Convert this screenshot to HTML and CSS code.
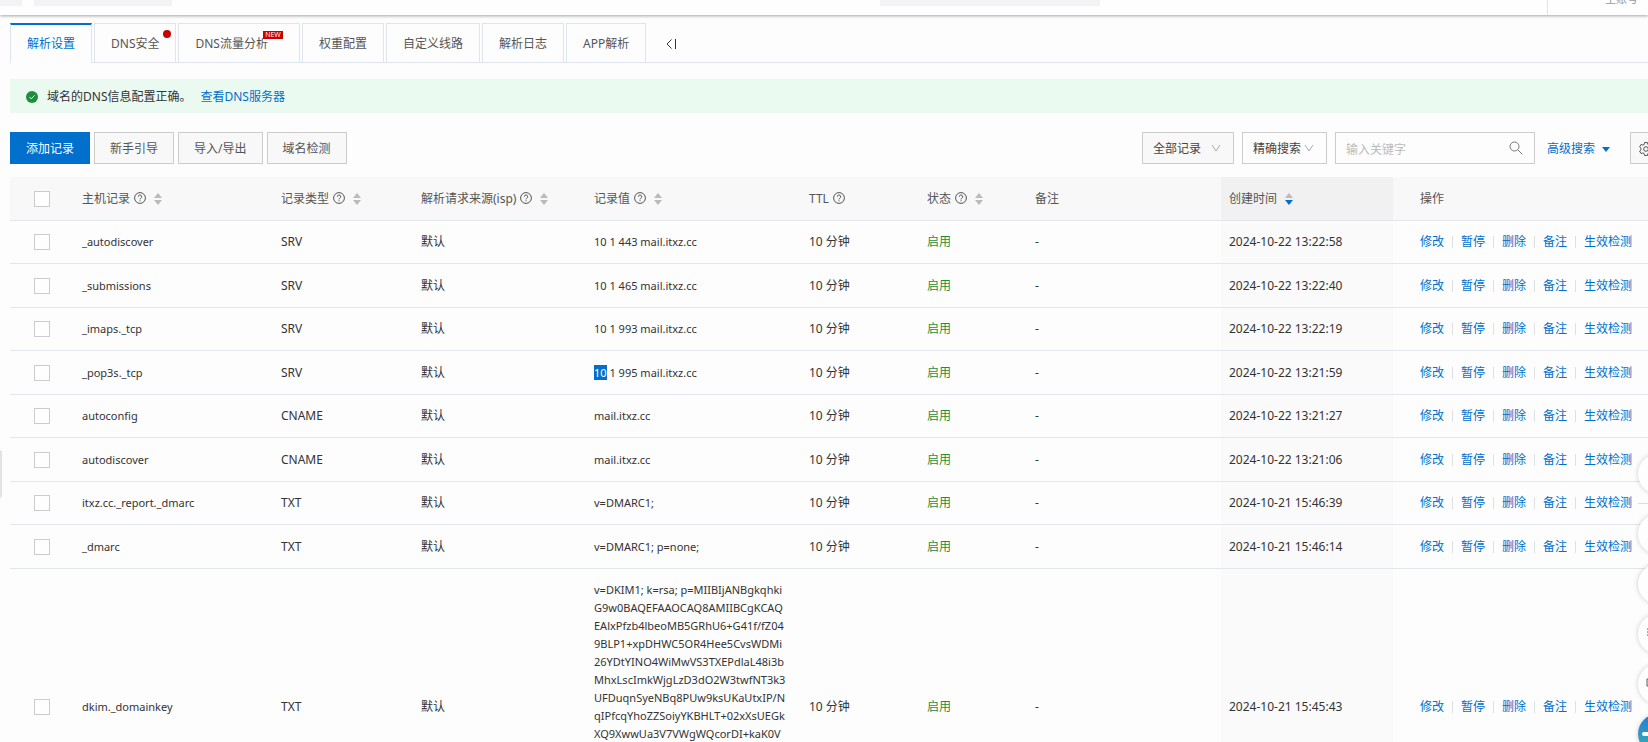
FILE: index.html
```
<!DOCTYPE html>
<html lang="zh-CN">
<head>
	<title>解析设置</title>
	<meta charset="utf-8">
	<meta name="viewport" content="width=device-width, initial-scale=1">
	<link rel="stylesheet" href="styles.css">
</head>
<body>
	<svg class="sprite">
		<symbol id="help" viewBox="0 0 12 12"><circle cx="6" cy="6" r="5.4"/><path d="M4.3 4.7a1.7 1.7 0 1 1 2.5 1.5c-.6.3-.8.6-.8 1.2M6 8.3v1"/></symbol>
		<symbol id="sort" viewBox="0 0 8 12"><path class="up" d="M4 0l4 5H0z"/><path class="down" d="M0 7h8l-4 5z"/></symbol>
		<symbol id="chevron" viewBox="0 0 10 8"><path d="M1 1l4 6 4-6"/></symbol>
	</svg>

	<header class="topbar">
		<span class="block block-logo"></span>
		<span class="block block-menu"></span>
		<span class="block block-search"></span>
		<div class="account"><span>主账号</span></div>
	</header>

	<main class="page">
		<nav class="tabs">
			<a class="tab active" href="#">解析设置</a>
			<a class="tab" href="#">DNS安全<i class="dot"></i></a>
			<a class="tab tab-new" href="#">DNS流量分析<i class="new">NEW</i></a>
			<a class="tab" href="#">权重配置</a>
			<a class="tab" href="#">自定义线路</a>
			<a class="tab" href="#">解析日志</a>
			<a class="tab" href="#">APP解析</a>
			<button class="collapse" type="button" aria-label="收起"><svg width="10" height="12" viewBox="0 0 10 12"><path d="M5.500 1.500L1 6l4.500 4.500M9.500 1v10"/></svg></button>
		</nav>

		<div class="notice">
			<svg width="12" height="12" viewBox="0 0 12 12"><circle cx="6" cy="6" r="6"/><path d="M3.500 6l1.800 1.800 3.200-3.400"/></svg>
			<span>域名的DNS信息配置正确。</span>
			<a href="#">查看DNS服务器</a>
		</div>

		<div class="toolbar">
			<button class="btn primary" type="button">添加记录</button>
			<button class="btn" type="button">新手引导</button>
			<button class="btn" type="button">导入/导出</button>
			<button class="btn" type="button">域名检测</button>
			<form class="filters">
				<div class="select select-type">
					<select aria-label="记录范围"><option>全部记录</option></select>
					<svg class="chevron"><use href="#chevron"/></svg>
				</div>
				<div class="select select-mode">
					<select aria-label="搜索方式"><option>精确搜索</option></select>
					<svg class="chevron"><use href="#chevron"/></svg>
				</div>
				<div class="search">
					<input type="text" placeholder="输入关键字" aria-label="输入关键字">
					<svg width="14" height="14" viewBox="0 0 14 14"><circle cx="5.500" cy="5.500" r="4.500"/><path d="M9 9l4.300 4.300"/></svg>
				</div>
				<a class="advanced" href="#">高级搜索<i class="caret"></i></a>
				<button class="btn gear" type="button" aria-label="设置"><svg width="16" height="16" viewBox="0 0 16 16"><path d="M6.600 1.500h2.800l.4 1.900 1.300.7 1.800-.7 1.500 2.500-1.400 1.300v1.600l1.400 1.300-1.500 2.500-1.800-.7-1.300.7-.4 1.900H6.600l-.4-1.900-1.300-.7-1.800.7-1.500-2.500L3 8.800V7.200L1.600 5.900l1.500-2.500 1.800.7 1.300-.7z"/><circle cx="8" cy="8" r="2.300"/></svg></button>
			</form>
		</div>

		<table class="records">
			<colgroup>
				<col class="c-check"><col class="c-host"><col class="c-type"><col class="c-isp"><col class="c-value"><col class="c-ttl"><col class="c-status"><col class="c-remark"><col class="c-time"><col>
			</colgroup>
			<thead>
				<tr>
					<th class="check"><input type="checkbox" aria-label="全选"></th>
					<th>主机记录<svg class="help"><use href="#help"/></svg><svg class="sort"><use href="#sort"/></svg></th>
					<th>记录类型<svg class="help"><use href="#help"/></svg><svg class="sort"><use href="#sort"/></svg></th>
					<th>解析请求来源(isp)<svg class="help"><use href="#help"/></svg><svg class="sort"><use href="#sort"/></svg></th>
					<th>记录值<svg class="help"><use href="#help"/></svg><svg class="sort"><use href="#sort"/></svg></th>
					<th>TTL<svg class="help"><use href="#help"/></svg></th>
					<th>状态<svg class="help"><use href="#help"/></svg><svg class="sort"><use href="#sort"/></svg></th>
					<th>备注</th>
					<th class="time">创建时间<svg class="sort desc"><use href="#sort"/></svg></th>
					<th class="actions">操作</th>
				</tr>
			</thead>
			<tbody id="record-list"></tbody>
		</table>
	</main>

	<span class="drawer-handle"></span>
	<aside class="float-tools">
		<button type="button" aria-label="工具"></button>
		<hr>
		<button type="button" aria-label="消息"></button>
		<button type="button" aria-label="文档"></button>
		<button type="button" aria-label="应用"><svg width="16" height="16" viewBox="0 0 16 16"><path d="M1 5h14M1 8h14M1 11h14"/></svg></button>
		<button type="button" aria-label="反馈"><svg width="16" height="16" viewBox="0 0 16 16"><path d="M1 5v7h13V5z"/></svg></button>
		<button class="assistant" type="button" aria-label="助手"><i></i></button>
	</aside>

<script>
	const records = [
		['_autodiscover', 'SRV', '10 1 443 mail.itxz.cc', '2024-10-22 13:22:58'],
		['_submissions', 'SRV', '10 1 465 mail.itxz.cc', '2024-10-22 13:22:40'],
		['_imaps._tcp', 'SRV', '10 1 993 mail.itxz.cc', '2024-10-22 13:22:19'],
		['_pop3s._tcp', 'SRV', '<mark>10</mark> 1 995 mail.itxz.cc', '2024-10-22 13:21:59'],
		['autoconfig', 'CNAME', 'mail.itxz.cc', '2024-10-22 13:21:27'],
		['autodiscover', 'CNAME', 'mail.itxz.cc', '2024-10-22 13:21:06'],
		['itxz.cc._report._dmarc', 'TXT', 'v=DMARC1;', '2024-10-21 15:46:39'],
		['_dmarc', 'TXT', 'v=DMARC1; p=none;', '2024-10-21 15:46:14'],
		['dkim._domainkey', 'TXT', 'v=DKIM1; k=rsa; p=MIIBIjANBgkqhki<br>G9w0BAQEFAAOCAQ8AMIIBCgKCAQ<br>EAlxPfzb4lbeoMB5GRhU6+G41f/fZ04<br>9BLP1+xpDHWC5OR4Hee5CvsWDMi<br>26YDtYINO4WiMwVS3TXEPdlaL48i3b<br>MhxLscImkWjgLzD3dO2W3twfNT3k3<br>UFDuqnSyeNBq8PUw9ksUKaUtxIP/N<br>qIPfcqYhoZZSoiyYKBHLT+02xXsUEGk<br>XQ9XwwUa3V7VWgWQcorDI+kaK0V', '2024-10-21 15:45:43']
	];
	const actions = ['修改', '暂停', '删除', '备注', '生效检测'];

	let html = '';
	records.forEach(([host, type, value, time]) => {
		html += `
		<tr class="${value.length > 100 ? 'long' : ''}">
			<td class="check"><input type="checkbox" aria-label="${host}"></td>
			<td class="host">${host}</td>
			<td>${type}</td>
			<td>默认</td>
			<td class="value">${value}</td>
			<td>10 分钟</td>
			<td class="status">启用</td>
			<td>-</td>
			<td class="time">${time}</td>
			<td class="actions"><div class="links">${actions.map(name => `<a href="#">${name}</a>`).join('')}</div></td>
		</tr>`;
	});
	document.getElementById('record-list').innerHTML = html;
</script>
</body>
</html>
```
FILE: styles.css
```
* {
	box-sizing: border-box;
}

body {
	margin: 0;
	height: 100vh;
	overflow: hidden;
	background: #fdfdfd;
	color: #333;
	font: 12px/18px "Noto Sans", "Noto Sans CJK SC", sans-serif;
}

a {
	color: #0070cc;
	text-decoration: none;
}

button, input, select {
	font: inherit;
	color: inherit;
}

svg {
	fill: none;
	stroke: #555;
	flex: none;
}

.sprite {
	display: none;
}

/* top bar */
.topbar {
	display: flex;
	height: 15px;
	background: #fefefe;
	box-shadow: 0 1px 3px rgba(0,0,0,0.35);
}

.block {
	height: 6px;
	background: #f2f3f5;
}

.block-logo {
	width: 22px;
	margin-right: 12px;
}

.block-menu {
	width: 138px;
}

.block-search {
	width: 220px;
	margin-left: auto;
	margin-right: 447px;
}

.account {
	display: flex;
	align-items: flex-end;
	justify-content: flex-end;
	width: 101px;
	padding: 0 10px 7px 0;
	border-left: 1px solid #e3e4e6;
	color: #999;
	font-size: 11px;
}

.page {
	padding: 8px 0 0 10px;
}

/* tabs */
.tabs {
	display: flex;
	gap: 2px;
	height: 40px;
	border-bottom: 1px solid #dee5ed;
}

.tab {
	position: relative;
	height: 39px;
	padding: 11px 16px 9px;
	border: 1px solid #dee5ed;
	border-bottom: 0;
	color: #555;
}

.tab.active {
	height: 40px;
	padding-top: 10px;
	border-top: 2px solid #0070cc;
	background: #fdfdfd;
	color: #0070cc;
}

.tab-new {
	padding-right: 31px;
}

.dot {
	position: absolute;
	top: 6px;
	right: 4px;
	width: 8px;
	height: 8px;
	border-radius: 50%;
	background: #c80000;
}

.new {
	position: absolute;
	top: 7px;
	right: 16px;
	width: 20px;
	background: #c80000;
	color: #fff;
	font: 7px/8px "Open Sans", sans-serif;
	text-align: center;
}

.collapse {
	margin-left: 16px;
	padding: 6px 2px 0;
	border: 0;
	background: none;
}

.collapse svg {
	stroke: #333;
}

.notice {
	display: flex;
	align-items: center;
	height: 34px;
	margin-top: 16px;
	padding: 1px 16px 0;
	background: #ebfaf0;
}

.notice circle {
	fill: #1e8e3e;
	stroke: none;
}

.notice path {
	stroke: #fff;
}

.notice span {
	margin: 0 9px;
}

/* toolbar */
.toolbar {
	display: flex;
	gap: 4px;
	margin: 19px -14px 13px 0;
}

.btn {
	height: 32px;
	padding: 2px 15px 0;
	border: 1px solid #ccc;
	background: #f8f8f8;
	color: #555;
}

.btn.primary {
	border-color: #0070cc;
	background: #0070cc;
	color: #fff;
}

.filters {
	display: flex;
	align-items: center;
	gap: 8px;
	margin-left: auto;
}

.select, .search {
	position: relative;
	height: 32px;
}

.select select {
	width: 100%;
	height: 100%;
	padding: 2px 10px 0;
	border: 1px solid #ccc;
	border-radius: 0;
	appearance: none;
	background: #fdfdfd;
	color: #444;
}

.select-type {
	width: 92px;
}

.select-type select {
	background: #f8f8f8;
}

.select-mode {
	width: 85px;
}

.chevron {
	position: absolute;
	top: 12px;
	right: 13px;
	width: 10px;
	height: 8px;
	stroke: #aaa;
	pointer-events: none;
}

.search input {
	width: 200px;
	height: 32px;
	padding: 2px 32px 0 10px;
	border: 1px solid #ccc;
	background: #fdfdfd;
}

.search input::placeholder {
	color: #bbb;
}

.search svg {
	position: absolute;
	top: 9px;
	right: 12px;
	stroke: #777;
}

.advanced {
	display: flex;
	align-items: center;
	gap: 7px;
	margin: 0 12px 0 4px;
	padding-top: 2px;
}

.caret {
	border: 4px solid transparent;
	border-top: 5px solid #0070cc;
	border-bottom: 0;
}

.gear {
	display: flex;
	align-items: center;
	width: 32px;
	padding: 2px 7px 0;
}

/* records */
.records {
	width: 100%;
	table-layout: fixed;
	border-collapse: separate;
	border-spacing: 0;
}

.c-check { width: 64px; }
.c-host { width: 199px; }
.c-type { width: 140px; }
.c-isp { width: 173px; }
.c-value { width: 215px; }
.c-ttl { width: 118px; }
.c-status { width: 108px; }
.c-remark { width: 194px; }
.c-time { width: 172px; }

th, td {
	padding: 0 8px;
	border-bottom: 1px solid #e3e6ea;
	text-align: left;
	vertical-align: middle;
	white-space: nowrap;
}

th {
	height: 44px;
	background: #f8f8f8;
	color: #555;
	font-weight: normal;
}

td {
	height: 43px;
}

tr:nth-child(even) td {
	height: 44px;
}

th.time {
	background: #f1f1f1;
}

td.time {
	background: #fafafa;
}

.host, .value {
	font-size: 11px;
}

.check {
	padding-left: 24px;
}

.check input {
	display: block;
	width: 16px;
	height: 16px;
	margin: 0;
	border: 1px solid #ccc;
	appearance: none;
	background: #fefefe;
}

.actions {
	padding: 0 0 0 27px;
}

.help {
	width: 12px;
	height: 12px;
	margin-left: 4px;
	vertical-align: -1px;
}

.sort {
	width: 8px;
	height: 12px;
	margin-left: 8px;
	vertical-align: -2px;
	stroke: none;
	fill: #bbb;
}

.sort.desc {
	--down: #0070cc;
}

.down {
	fill: var(--down, #bbb);
}

.status {
	color: #1e8e3e;
}

mark {
	background: #0070cc;
	color: #fff;
}

.links {
	display: flex;
}

.links a + a {
	margin-left: 8px;
	padding-left: 9px;
	background: linear-gradient(#dee0e3, #dee0e3) no-repeat 0 50% / 1px 12px;
}

tr.long td {
	height: 276px;
}

tr.long .value {
	padding-top: 12px;
	vertical-align: top;
}

/* floating things on both edges */
.drawer-handle {
	position: fixed;
	left: 0;
	top: 450px;
	width: 2px;
	height: 48px;
	border-radius: 0 4px 4px 0;
	background: #e3e3e3;
}

.float-tools {
	position: fixed;
	top: 454px;
	right: -30px;
	display: flex;
	flex-direction: column;
	gap: 10px;
}

.float-tools hr {
	width: 40px;
	height: 1px;
	margin: -1px 0 0;
	border: 0;
	background: #ddd;
}

.float-tools button {
	width: 40px;
	height: 40px;
	padding: 0 8px;
	border: 0;
	border-radius: 50%;
	background: #fefefe;
	box-shadow: 0 0 5px rgba(0,0,0,0.2);
	text-align: left;
}

.float-tools .assistant {
	padding: 0 4px;
	background: linear-gradient(#2a78d8, #35b8a8);
}

.assistant i {
	display: block;
	width: 32px;
	height: 4px;
	border-radius: 2px;
	background: #fff;
}
```
